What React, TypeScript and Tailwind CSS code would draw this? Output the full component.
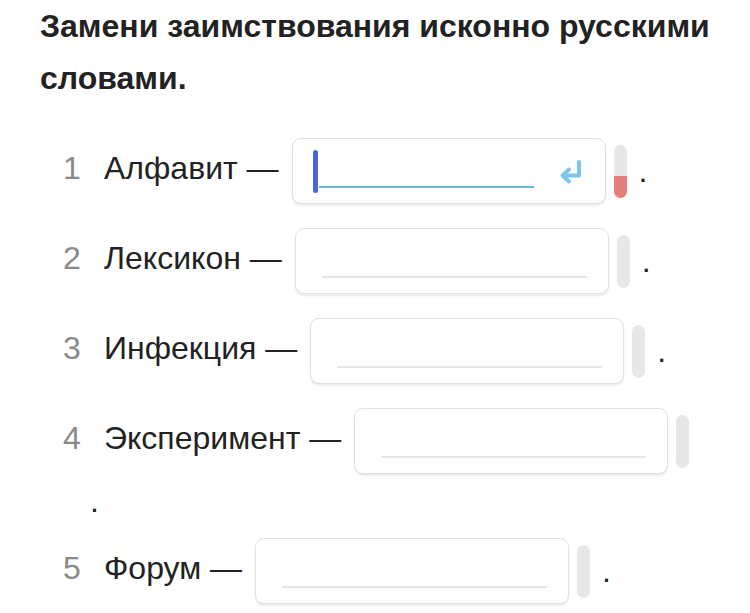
import React from 'react';

const items = [
  { n: 1, word: 'Алфавит', active: true },
  { n: 2, word: 'Лексикон' },
  { n: 3, word: 'Инфекция' },
  { n: 4, word: 'Эксперимент', wrapDot: true },
  { n: 5, word: 'Форум' },
];

const EnterIcon = () => (
  <svg width="26" height="28" viewBox="0 0 26 28" fill="none">
    <path d="M21 3v13.5H5" stroke="#7cc4ec" strokeWidth="4" strokeLinecap="round" strokeLinejoin="round" />
    <path d="M11 10.5l-6.5 6 6.5 6" stroke="#7cc4ec" strokeWidth="4" strokeLinecap="round" strokeLinejoin="round" />
  </svg>
);

const AnswerBox = ({ active }: { active?: boolean }) => (
  <div className="relative flex h-[66px] w-[314px] shrink-0 items-end rounded-[9px] border border-[#e2e0da] bg-white pb-[15px] pl-[26px] pr-[21px] shadow-[0_2px_2px_rgba(0,0,0,0.08)]">
    {active ? (
      <>
        <div className="absolute left-[20px] top-[11px] h-[43px] w-[5px] rounded-full bg-[#4a62dc]" />
        <div className="h-[2px] w-[215px] bg-[#6cb6dc]" />
        <div className="ml-auto mb-[1px]">
          <EnterIcon />
        </div>
      </>
    ) : (
      <div className="h-[2px] w-full bg-[#e6e6e6]" />
    )}
  </div>
);

const Pill = ({ active }: { active?: boolean }) => (
  <div className="ml-[8px] flex h-[53px] w-[13px] shrink-0 flex-col justify-end overflow-hidden rounded-full bg-[#e7e7ea]">
    {active && <div className="h-[22px] w-full bg-[#e57f7b]" />}
  </div>
);

export default function App() {
  return (
    <div className="min-h-[613px] bg-white pl-[40px] font-['Liberation_Sans',Arial,sans-serif] text-[#222]">
      <h1 className="pr-[20px] text-[32px] font-bold leading-[52px]">
        Замени заимствования исконно русскими словами.
      </h1>
      <div className="mt-[22px]">
        {items.map((it) => (
          <div key={it.n}>
            <div className="flex h-[90px] items-center">
              <span className="ml-[23px] w-[41px] pb-[6px] text-[32px] text-[#8a8a8a]">{it.n}</span>
              <span className="whitespace-nowrap pb-[6px] text-[32px]">{it.word} —</span>
              <div className="ml-[13px] flex items-center">
                <AnswerBox active={it.active} />
                <Pill active={it.active} />
              </div>
              {!it.wrapDot && <span className="ml-[12px] text-[32px]">.</span>}
            </div>
            {it.wrapDot && (
              <div className="flex h-[40px] items-start pl-[50px] text-[32px] leading-[30px]">.</div>
            )}
          </div>
        ))}
      </div>
    </div>
  );
}
